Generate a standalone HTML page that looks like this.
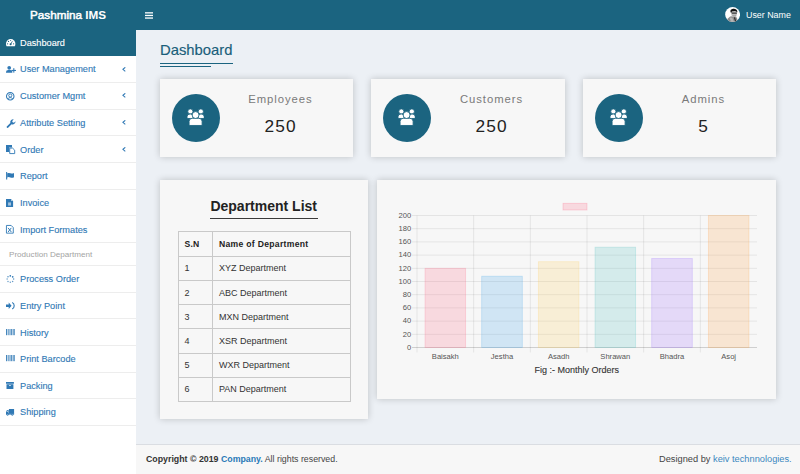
<!DOCTYPE html>
<html><head><meta charset="utf-8"><style>
*{box-sizing:border-box;margin:0;padding:0}
html,body{width:800px;height:474px;overflow:hidden;background:#ecf0f5;font-family:"Liberation Sans",sans-serif}
.a{position:absolute}
.t{position:absolute;white-space:nowrap}
.card{position:absolute;background:#f7f7f7;box-shadow:0 0 7px rgba(0,0,0,.2)}
</style></head><body>
<div class="a" style="left:0;top:0;width:800px;height:29.5px;background:#1b6480"></div>
<div class="t" style="left:30px;top:6.5px;color:#fff;font-size:11.7px;line-height:16px"><span style="-webkit-text-stroke:0.5px #fff">Pashmina</span> <b>IMS</b></div>
<svg class="a" style="left:145px;top:12px" width="8" height="7" viewBox="0 0 8 7"><g fill="#fff"><rect x="0" y="0.2" width="8" height="1.3"/><rect x="0" y="2.8" width="8" height="1.3"/><rect x="0" y="5.4" width="8" height="1.3"/></g></svg>
<svg class="a" style="left:725px;top:7.3px" width="15.2" height="15" viewBox="0 0 15 15"><defs><clipPath id="av"><circle cx="7.5" cy="7.5" r="7.4"/></clipPath></defs><circle cx="7.5" cy="7.5" r="7.45" fill="#fff"/><g clip-path="url(#av)"><path d="M1.5 15 Q2.2 11 5 9.6 L7.2 9.2 L11 9.6 Q12.6 11.5 12.4 15Z" fill="#8c8c8c"/><path d="M4.5 11 Q6 10 7.5 11.5 L9 15 L6 15Z" fill="#b5b5b5"/><path d="M8.6 10 L10.2 15 L11.2 15 L9.8 9.8Z" fill="#2a2a2a"/><ellipse cx="9" cy="7.2" rx="2.7" ry="3.1" fill="#bdbdbd"/><path d="M5.4 5 Q4.8 2.2 8 1.7 Q11.6 1.4 12.2 4.2 Q12.3 5.2 11.7 5.8 L11.2 4.4 Q9.2 3.6 6.8 4.6 L6.2 6.2Z" fill="#111"/><rect x="6.6" y="5.6" width="5.2" height="1.2" rx="0.4" fill="#3a3a3a"/><path d="M7.5 8.6 Q9 9.4 10.6 8.4" stroke="#777" stroke-width="0.5" fill="none"/></g></svg>
<div class="t" style="left:746px;top:9px;color:#fff;font-size:8.9px;line-height:12px">User Name</div>
<div class="a" style="left:0;top:29.5px;width:136px;height:445px;background:#fff"></div>
<div class="a" style="left:0;top:29.5px;width:136px;height:26px;background:#1b6480"></div>
<div class="a" style="left:0;top:82px;width:136px;height:1px;background:#ededed"></div>
<div class="a" style="left:0;top:109px;width:136px;height:1px;background:#ededed"></div>
<div class="a" style="left:0;top:135px;width:136px;height:1px;background:#ededed"></div>
<div class="a" style="left:0;top:162px;width:136px;height:1px;background:#ededed"></div>
<div class="a" style="left:0;top:189px;width:136px;height:1px;background:#ededed"></div>
<div class="a" style="left:0;top:215px;width:136px;height:1px;background:#ededed"></div>
<div class="a" style="left:0;top:242px;width:136px;height:1px;background:#ededed"></div>
<div class="a" style="left:0;top:265px;width:136px;height:1px;background:#ededed"></div>
<div class="a" style="left:0;top:292px;width:136px;height:1px;background:#ededed"></div>
<div class="a" style="left:0;top:318px;width:136px;height:1px;background:#ededed"></div>
<div class="a" style="left:0;top:345px;width:136px;height:1px;background:#ededed"></div>
<div class="a" style="left:0;top:372px;width:136px;height:1px;background:#ededed"></div>
<div class="a" style="left:0;top:398px;width:136px;height:1px;background:#ededed"></div>
<div class="a" style="left:0;top:425px;width:136px;height:1px;background:#ededed"></div>
<div class="t" style="left:20px;top:37.06px;font-size:9.2px;line-height:12px;color:#fff;-webkit-text-stroke:0.12px #fff">Dashboard</div>
<svg class="a" style="left:5.5px;top:38.9px;color:#fff" width="9.4" height="7.3" viewBox="0 0 9.4 7.3" overflow="visible"><path d="M0.6 7.2 Q0 6.4 0 4.7 A4.7 4.7 0 0 1 9.4 4.7 Q9.4 6.4 8.8 7.2Z" fill="#fff"/><g fill="#1b6480"><circle cx="4.6" cy="5.3" r="1.0"/><path d="M4.2 5.2 L6.2 1.9 L6.7 2.2 L5 5.5Z"/><circle cx="1.6" cy="4.8" r="0.6"/><circle cx="2.5" cy="2.4" r="0.6"/><circle cx="7.6" cy="4.8" r="0.6"/><circle cx="4.6" cy="1.4" r="0.5"/></g></svg>
<div class="t" style="left:20px;top:63.41px;font-size:9.2px;line-height:12px;color:#3079b5;-webkit-text-stroke:0.12px #3079b5">User Management</div>
<svg class="a" style="left:6.0px;top:66.0px;color:#3079b5" width="10" height="7" viewBox="0 0 10 7" overflow="visible"><g fill="currentColor"><circle cx="3.2" cy="1.85" r="1.85"/><path d="M0 6.8 L0 6 Q0 3.9 2.3 3.9 L4.1 3.9 Q5.9 3.9 6.3 5.3 L6.3 6.8Z"/><rect x="5.6" y="3.9" width="4.4" height="1.1"/><rect x="7.25" y="2.2" width="1.1" height="4.4"/></g></svg>
<svg class="a" style="left:121.5px;top:66.65px" width="4" height="5" viewBox="0 0 4 5"><path d="M3.3 0.3 L0.9 2.3 L3.3 4.4" fill="none" stroke="#3079b5" stroke-width="1.05"/></svg>
<div class="t" style="left:20px;top:90.21px;font-size:9.2px;line-height:12px;color:#3079b5;-webkit-text-stroke:0.12px #3079b5">Customer Mgmt</div>
<svg class="a" style="left:6.0px;top:91.8px;color:#3079b5" width="8.5" height="8.5" viewBox="0 0 8.5 8.5" overflow="visible"><circle cx="4.25" cy="4.25" r="3.75" fill="#fff" stroke="currentColor" stroke-width="1.05"/><circle cx="4.25" cy="3.5" r="1.55" fill="none" stroke="currentColor" stroke-width="0.95"/><path d="M1.8 6.9 Q2.4 5.6 4.25 5.6 Q6.1 5.6 6.7 6.9" fill="none" stroke="currentColor" stroke-width="0.95"/></svg>
<svg class="a" style="left:121.5px;top:93.45px" width="4" height="5" viewBox="0 0 4 5"><path d="M3.3 0.3 L0.9 2.3 L3.3 4.4" fill="none" stroke="#3079b5" stroke-width="1.05"/></svg>
<div class="t" style="left:20px;top:116.91px;font-size:9.2px;line-height:12px;color:#3079b5;-webkit-text-stroke:0.12px #3079b5">Attribute Setting</div>
<svg class="a" style="left:5.5px;top:118.6px;color:#3079b5" width="9.6" height="9.3" viewBox="0 0 9.6 9.3" overflow="visible"><path d="M0.8 7.4 L4.3 3.9 Q3.9 2.2 5.2 1 Q6.3 0.1 7.7 0.4 L6.2 1.9 L6.6 3.3 L8 3.7 L9.5 2.2 Q9.6 3.8 8.4 4.8 Q7.2 5.7 5.6 5.2 L2.1 8.7 Q1.5 9.2 0.8 8.6 Q0.3 8 0.8 7.4Z" fill="currentColor"/></svg>
<svg class="a" style="left:121.5px;top:120.15px" width="4" height="5" viewBox="0 0 4 5"><path d="M3.3 0.3 L0.9 2.3 L3.3 4.4" fill="none" stroke="#3079b5" stroke-width="1.05"/></svg>
<div class="t" style="left:20px;top:143.61px;font-size:9.2px;line-height:12px;color:#3079b5;-webkit-text-stroke:0.12px #3079b5">Order</div>
<svg class="a" style="left:6.0px;top:145.0px;color:#3079b5" width="9.2" height="9.2" viewBox="0 0 9.2 9.2" overflow="visible"><path d="M0 0 L6 0 L6 2.6 L3.2 2.6 L3.2 7 L0 7Z" fill="currentColor"/><path d="M3.7 3.1 L6.6 3.1 L8.7 5.2 L8.7 8.6 L3.7 8.6Z" fill="none" stroke="currentColor" stroke-width="0.9"/></svg>
<svg class="a" style="left:121.5px;top:146.85px" width="4" height="5" viewBox="0 0 4 5"><path d="M3.3 0.3 L0.9 2.3 L3.3 4.4" fill="none" stroke="#3079b5" stroke-width="1.05"/></svg>
<div class="t" style="left:20px;top:170.31px;font-size:9.2px;line-height:12px;color:#3079b5;-webkit-text-stroke:0.12px #3079b5">Report</div>
<svg class="a" style="left:6.2px;top:172.4px;color:#3079b5" width="8.2" height="7.5" viewBox="0 0 8.2 7.5" overflow="visible"><rect x="0.1" y="0" width="1.1" height="7.5" fill="currentColor"/><path d="M1.2 1.2 Q2.6 0.6 4.4 1.3 Q6.2 2 8 1 L8 5.3 Q6.2 6.2 4.4 5.5 Q2.6 4.8 1.2 5.4Z" fill="currentColor"/></svg>
<div class="t" style="left:20px;top:197.01px;font-size:9.2px;line-height:12px;color:#3079b5;-webkit-text-stroke:0.12px #3079b5">Invoice</div>
<svg class="a" style="left:6.0px;top:198.7px;color:#3079b5" width="7.1" height="8.1" viewBox="0 0 7.1 8.1" overflow="visible"><path d="M0 0 L5 0 L7.1 2.1 L7.1 8.1 L0 8.1Z" fill="currentColor"/><path d="M5 0 L5 2.1 L7.1 2.1" fill="#fff" opacity="0.6"/><rect x="2.1" y="3.6" width="2.9" height="1.1" fill="#fff" opacity="0.8"/><rect x="2.1" y="5.3" width="2.9" height="1.1" fill="#fff" opacity="0.8"/></svg>
<div class="t" style="left:20px;top:223.66px;font-size:9.2px;line-height:12px;color:#3079b5;-webkit-text-stroke:0.12px #3079b5">Import Formates</div>
<svg class="a" style="left:6.0px;top:225.2px;color:#3079b5" width="7.8" height="8.6" viewBox="0 0 7.8 8.6" overflow="visible"><path d="M0.45 0.45 L5.2 0.45 L7.3 2.6 L7.3 8.15 L0.45 8.15Z" fill="none" stroke="currentColor" stroke-width="0.9"/><path d="M2.1 2.9 L5.3 7 M5.3 2.9 L2.1 7" stroke="currentColor" stroke-width="1"/></svg>
<div class="t" style="left:20px;top:273.36px;font-size:9.2px;line-height:12px;color:#3079b5;-webkit-text-stroke:0.12px #3079b5">Process Order</div>
<svg class="a" style="left:6.8px;top:274.8px;color:#3079b5" width="7.6" height="8.1" viewBox="0 0 7.6 8.1" overflow="visible"><g fill="currentColor"><circle cx="3.3" cy="0.8" r="0.85"/><circle cx="5.7" cy="1.8" r="0.85"/><circle cx="6.6" cy="4.1" r="0.75" opacity="0.8"/><circle cx="5.6" cy="6.4" r="0.75" opacity="0.75"/><circle cx="3.3" cy="7.3" r="0.75" opacity="0.7"/><circle cx="1" cy="6.4" r="0.75" opacity="0.7"/><circle cx="0.1" cy="4.1" r="0.75" opacity="0.7"/><circle cx="1" cy="1.8" r="0.8" opacity="0.8"/></g></svg>
<div class="t" style="left:20px;top:299.96px;font-size:9.2px;line-height:12px;color:#3079b5;-webkit-text-stroke:0.12px #3079b5">Entry Point</div>
<svg class="a" style="left:6.0px;top:301.6px;color:#3079b5" width="8.8" height="7.6" viewBox="0 0 8.8 7.6" overflow="visible"><path d="M0 2.5 L2.7 2.5 L2.7 0.5 L5.6 3.8 L2.7 7.1 L2.7 5.1 L0 5.1Z" fill="currentColor"/><path d="M6.2 0.6 Q8.2 1.4 8.2 3.8 Q8.2 6.2 6.2 7" fill="none" stroke="currentColor" stroke-width="1.1"/></svg>
<div class="t" style="left:20px;top:326.56px;font-size:9.2px;line-height:12px;color:#3079b5;-webkit-text-stroke:0.12px #3079b5">History</div>
<svg class="a" style="left:6.0px;top:328.8px;color:#3079b5" width="8.7" height="6.2" viewBox="0 0 8.7 6.2" overflow="visible"><g fill="currentColor"><rect x="0" y="0" width="0.9" height="6.2"/><rect x="1.5" y="0" width="0.5" height="6.2" opacity="0.6"/><rect x="2.4" y="0" width="0.9" height="6.2"/><rect x="3.8" y="0" width="0.6" height="6.2"/><rect x="4.9" y="0" width="0.9" height="6.2"/><rect x="6.3" y="0" width="0.5" height="6.2" opacity="0.7"/><rect x="7.4" y="0" width="1.3" height="6.2"/></g></svg>
<div class="t" style="left:20px;top:353.16px;font-size:9.2px;line-height:12px;color:#3079b5;-webkit-text-stroke:0.12px #3079b5">Print Barcode</div>
<svg class="a" style="left:6.0px;top:355.4px;color:#3079b5" width="8.7" height="6.2" viewBox="0 0 8.7 6.2" overflow="visible"><g fill="currentColor"><rect x="0" y="0" width="0.9" height="6.2"/><rect x="1.5" y="0" width="0.5" height="6.2" opacity="0.6"/><rect x="2.4" y="0" width="0.9" height="6.2"/><rect x="3.8" y="0" width="0.6" height="6.2"/><rect x="4.9" y="0" width="0.9" height="6.2"/><rect x="6.3" y="0" width="0.5" height="6.2" opacity="0.7"/><rect x="7.4" y="0" width="1.3" height="6.2"/></g></svg>
<div class="t" style="left:20px;top:379.81px;font-size:9.2px;line-height:12px;color:#3079b5;-webkit-text-stroke:0.12px #3079b5">Packing</div>
<svg class="a" style="left:6.2px;top:382.1px;color:#3079b5" width="7.9" height="6.9" viewBox="0 0 7.9 6.9" overflow="visible"><path d="M0 0 L7.9 0 L7.9 1.8 L0 1.8Z M0.5 2.3 L7.4 2.3 L7.4 6.9 L0.5 6.9Z" fill="currentColor"/><rect x="3" y="3" width="1.9" height="1" fill="#fff" opacity="0.7"/></svg>
<div class="t" style="left:20px;top:406.46px;font-size:9.2px;line-height:12px;color:#3079b5;-webkit-text-stroke:0.12px #3079b5">Shipping</div>
<svg class="a" style="left:6.1px;top:408.8px;color:#3079b5" width="8.1" height="6.7" viewBox="0 0 8.1 6.7" overflow="visible"><g fill="currentColor"><rect x="2.9" y="0" width="5.2" height="4.7"/><path d="M0 2.9 L1 1.1 L2.6 1.1 L2.6 5.2 L0 5.2Z"/><rect x="0" y="4.3" width="8.1" height="1.3"/><circle cx="1.6" cy="5.6" r="1.1"/><circle cx="6.3" cy="5.6" r="1.1"/></g><path d="M0.6 2.9 L1.2 1.8 L2 1.8 L2 2.9Z" fill="#fff" opacity="0.6"/><circle cx="1.6" cy="5.6" r="0.4" fill="#fff"/><circle cx="6.3" cy="5.6" r="0.4" fill="#fff"/></svg>
<div class="t" style="left:9px;top:248.94px;font-size:8.1px;line-height:12px;color:#a3a3a3">Production Department</div>
<div class="a" style="left:136px;top:29.5px;width:664px;height:414px;background:#ecf0f5"></div>
<div class="a" style="left:136px;top:443.5px;width:664px;height:31px;background:#f7f7f7;border-top:1px solid #dadde2"></div>
<div class="t" style="left:160px;top:40.87px;color:#195e7a;font-size:14.8px;line-height:18px;-webkit-text-stroke:0.15px #195e7a">Dashboard</div>
<div class="a" style="left:160px;top:62.8px;width:72.5px;height:1.2px;background:#1b6480"></div>
<div class="a" style="left:160px;top:65.7px;width:51px;height:1.2px;background:#1b6480"></div>
<div class="card" style="left:160px;top:79px;width:193px;height:77.5px">
<div class="a" style="left:11.7px;top:14.8px;width:48px;height:48px;border-radius:50%;background:#1b6480"></div>
<svg class="a" style="left:27.2px;top:30.2px" width="17.3" height="16.7" viewBox="0 0 16 15.5"><g fill="#fff" stroke="#1b6480" stroke-width="0.8"><circle cx="3.1" cy="2.3" r="2.4"/><circle cx="12.8" cy="2.3" r="2.4"/><path d="M0 8.8 L0 7.2 Q0 4.6 3 4.6 Q5.2 4.6 5.6 6.2 L5.6 8.8Z"/><path d="M16 8.8 L16 7.2 Q16 4.6 13 4.6 Q10.8 4.6 10.4 6.2 L10.4 8.8Z"/><path d="M1.9 15.3 L1.9 11.6 Q1.9 8.6 5 8.6 L10.9 8.6 Q14 8.6 14 11.6 L14 15.3Z"/><circle cx="7.95" cy="5.6" r="3.2"/></g></svg>
<div class="t" style="left:60px;width:120px;text-align:center;top:14.23px;font-size:11.3px;line-height:12px;letter-spacing:0.95px;text-indent:0.95px;color:#7a7a7a">Employees</div>
<div class="t" style="left:60px;width:120px;text-align:center;top:36.70px;font-size:17.3px;line-height:20px;letter-spacing:1.2px;text-indent:1.2px;color:#222">250</div>
</div>
<div class="card" style="left:371px;top:79px;width:194px;height:77.5px">
<div class="a" style="left:11.7px;top:14.8px;width:48px;height:48px;border-radius:50%;background:#1b6480"></div>
<svg class="a" style="left:27.2px;top:30.2px" width="17.3" height="16.7" viewBox="0 0 16 15.5"><g fill="#fff" stroke="#1b6480" stroke-width="0.8"><circle cx="3.1" cy="2.3" r="2.4"/><circle cx="12.8" cy="2.3" r="2.4"/><path d="M0 8.8 L0 7.2 Q0 4.6 3 4.6 Q5.2 4.6 5.6 6.2 L5.6 8.8Z"/><path d="M16 8.8 L16 7.2 Q16 4.6 13 4.6 Q10.8 4.6 10.4 6.2 L10.4 8.8Z"/><path d="M1.9 15.3 L1.9 11.6 Q1.9 8.6 5 8.6 L10.9 8.6 Q14 8.6 14 11.6 L14 15.3Z"/><circle cx="7.95" cy="5.6" r="3.2"/></g></svg>
<div class="t" style="left:60px;width:120px;text-align:center;top:14.23px;font-size:11.3px;line-height:12px;letter-spacing:0.95px;text-indent:0.95px;color:#7a7a7a">Customers</div>
<div class="t" style="left:60px;width:120px;text-align:center;top:36.70px;font-size:17.3px;line-height:20px;letter-spacing:1.2px;text-indent:1.2px;color:#222">250</div>
</div>
<div class="card" style="left:583px;top:79px;width:193px;height:77.5px">
<div class="a" style="left:11.7px;top:14.8px;width:48px;height:48px;border-radius:50%;background:#1b6480"></div>
<svg class="a" style="left:27.2px;top:30.2px" width="17.3" height="16.7" viewBox="0 0 16 15.5"><g fill="#fff" stroke="#1b6480" stroke-width="0.8"><circle cx="3.1" cy="2.3" r="2.4"/><circle cx="12.8" cy="2.3" r="2.4"/><path d="M0 8.8 L0 7.2 Q0 4.6 3 4.6 Q5.2 4.6 5.6 6.2 L5.6 8.8Z"/><path d="M16 8.8 L16 7.2 Q16 4.6 13 4.6 Q10.8 4.6 10.4 6.2 L10.4 8.8Z"/><path d="M1.9 15.3 L1.9 11.6 Q1.9 8.6 5 8.6 L10.9 8.6 Q14 8.6 14 11.6 L14 15.3Z"/><circle cx="7.95" cy="5.6" r="3.2"/></g></svg>
<div class="t" style="left:60px;width:120px;text-align:center;top:14.23px;font-size:11.3px;line-height:12px;letter-spacing:0.95px;text-indent:0.95px;color:#7a7a7a">Admins</div>
<div class="t" style="left:60px;width:120px;text-align:center;top:36.70px;font-size:17.3px;line-height:20px;letter-spacing:1.2px;text-indent:1.2px;color:#222">5</div>
</div>
<div class="card" style="left:160px;top:180.2px;width:208px;height:239.3px"></div>
<div class="t" style="left:210.4px;top:200.16px;font-size:14px;line-height:12px;font-weight:bold;color:#222">Department List</div>
<div class="a" style="left:210.4px;top:218.2px;width:108px;height:1.3px;background:#3a3a3a"></div>
<div class="a" style="left:178.2px;top:230.90px;width:173.1px;height:1px;background:#c9c9c9"></div>
<div class="a" style="left:178.2px;top:255.50px;width:173.1px;height:1px;background:#c9c9c9"></div>
<div class="a" style="left:178.2px;top:279.90px;width:173.1px;height:1px;background:#c9c9c9"></div>
<div class="a" style="left:178.2px;top:304.10px;width:173.1px;height:1px;background:#c9c9c9"></div>
<div class="a" style="left:178.2px;top:328.40px;width:173.1px;height:1px;background:#c9c9c9"></div>
<div class="a" style="left:178.2px;top:352.60px;width:173.1px;height:1px;background:#c9c9c9"></div>
<div class="a" style="left:178.2px;top:376.80px;width:173.1px;height:1px;background:#c9c9c9"></div>
<div class="a" style="left:178.2px;top:400.90px;width:173.1px;height:1px;background:#c9c9c9"></div>
<div class="a" style="left:177.70px;top:230.90px;width:1px;height:171.0px;background:#c9c9c9"></div>
<div class="a" style="left:212.00px;top:230.90px;width:1px;height:171.0px;background:#c9c9c9"></div>
<div class="a" style="left:349.80px;top:230.90px;width:1px;height:171.0px;background:#c9c9c9"></div>
<div class="t" style="left:184.4px;top:237.80px;line-height:12px;font-weight:bold;color:#222;font-size:8.6px;letter-spacing:0.3px">S.N</div>
<div class="t" style="left:219px;top:237.80px;line-height:12px;font-weight:bold;color:#222;font-size:8.6px;letter-spacing:0.3px">Name of Department</div>
<div class="t" style="left:184.4px;top:262.30px;line-height:12px;color:#333;font-size:9px">1</div>
<div class="t" style="left:219px;top:262.30px;line-height:12px;color:#333;font-size:9px">XYZ Department</div>
<div class="t" style="left:184.4px;top:286.60px;line-height:12px;color:#333;font-size:9px">2</div>
<div class="t" style="left:219px;top:286.60px;line-height:12px;color:#333;font-size:9px">ABC Department</div>
<div class="t" style="left:184.4px;top:310.85px;line-height:12px;color:#333;font-size:9px">3</div>
<div class="t" style="left:219px;top:310.85px;line-height:12px;color:#333;font-size:9px">MXN Department</div>
<div class="t" style="left:184.4px;top:335.10px;line-height:12px;color:#333;font-size:9px">4</div>
<div class="t" style="left:219px;top:335.10px;line-height:12px;color:#333;font-size:9px">XSR Department</div>
<div class="t" style="left:184.4px;top:359.30px;line-height:12px;color:#333;font-size:9px">5</div>
<div class="t" style="left:219px;top:359.30px;line-height:12px;color:#333;font-size:9px">WXR Department</div>
<div class="t" style="left:184.4px;top:383.45px;line-height:12px;color:#333;font-size:9px">6</div>
<div class="t" style="left:219px;top:383.45px;line-height:12px;color:#333;font-size:9px">PAN Department</div>
<div class="card" style="left:377px;top:180.2px;width:399px;height:219.3px"></div>
<svg class="a" style="left:0;top:0" width="800" height="474" viewBox="0 0 800 474" font-family="Liberation Sans" font-size="7.6" fill="#555"><line x1="412" y1="215.50" x2="757.0" y2="215.50" stroke="rgba(0,0,0,0.075)" stroke-width="1"/><text x="411.2" y="217.70" text-anchor="end">200</text><line x1="412" y1="228.70" x2="757.0" y2="228.70" stroke="rgba(0,0,0,0.075)" stroke-width="1"/><text x="411.2" y="230.90" text-anchor="end">180</text><line x1="412" y1="241.90" x2="757.0" y2="241.90" stroke="rgba(0,0,0,0.075)" stroke-width="1"/><text x="411.2" y="244.10" text-anchor="end">160</text><line x1="412" y1="255.10" x2="757.0" y2="255.10" stroke="rgba(0,0,0,0.075)" stroke-width="1"/><text x="411.2" y="257.30" text-anchor="end">140</text><line x1="412" y1="268.30" x2="757.0" y2="268.30" stroke="rgba(0,0,0,0.075)" stroke-width="1"/><text x="411.2" y="270.50" text-anchor="end">120</text><line x1="412" y1="281.50" x2="757.0" y2="281.50" stroke="rgba(0,0,0,0.075)" stroke-width="1"/><text x="411.2" y="283.70" text-anchor="end">100</text><line x1="412" y1="294.70" x2="757.0" y2="294.70" stroke="rgba(0,0,0,0.075)" stroke-width="1"/><text x="411.2" y="296.90" text-anchor="end">80</text><line x1="412" y1="307.90" x2="757.0" y2="307.90" stroke="rgba(0,0,0,0.075)" stroke-width="1"/><text x="411.2" y="310.10" text-anchor="end">60</text><line x1="412" y1="321.10" x2="757.0" y2="321.10" stroke="rgba(0,0,0,0.075)" stroke-width="1"/><text x="411.2" y="323.30" text-anchor="end">40</text><line x1="412" y1="334.30" x2="757.0" y2="334.30" stroke="rgba(0,0,0,0.075)" stroke-width="1"/><text x="411.2" y="336.50" text-anchor="end">20</text><line x1="412" y1="347.50" x2="757.0" y2="347.50" stroke="rgba(0,0,0,0.16)" stroke-width="1"/><text x="411.2" y="349.70" text-anchor="end">0</text><line x1="417.00" y1="215.5" x2="417.00" y2="352.5" stroke="rgba(0,0,0,0.075)" stroke-width="1"/><line x1="473.67" y1="215.5" x2="473.67" y2="352.5" stroke="rgba(0,0,0,0.075)" stroke-width="1"/><line x1="530.33" y1="215.5" x2="530.33" y2="352.5" stroke="rgba(0,0,0,0.075)" stroke-width="1"/><line x1="587.00" y1="215.5" x2="587.00" y2="352.5" stroke="rgba(0,0,0,0.075)" stroke-width="1"/><line x1="643.67" y1="215.5" x2="643.67" y2="352.5" stroke="rgba(0,0,0,0.075)" stroke-width="1"/><line x1="700.33" y1="215.5" x2="700.33" y2="352.5" stroke="rgba(0,0,0,0.075)" stroke-width="1"/><rect x="425.03" y="268.30" width="40.6" height="79.20" fill="rgba(255,99,132,0.2)" stroke="rgba(255,99,132,0.25)" stroke-width="0.8"/><text x="445.33" y="358.9" text-anchor="middle">Baisakh</text><rect x="481.70" y="276.22" width="40.6" height="71.28" fill="rgba(54,162,235,0.2)" stroke="rgba(54,162,235,0.25)" stroke-width="0.8"/><text x="502.00" y="358.9" text-anchor="middle">Jestha</text><rect x="538.37" y="261.70" width="40.6" height="85.80" fill="rgba(255,206,86,0.2)" stroke="rgba(255,206,86,0.25)" stroke-width="0.8"/><text x="558.67" y="358.9" text-anchor="middle">Asadh</text><rect x="595.03" y="247.18" width="40.6" height="100.32" fill="rgba(75,192,192,0.2)" stroke="rgba(75,192,192,0.25)" stroke-width="0.8"/><text x="615.33" y="358.9" text-anchor="middle">Shrawan</text><rect x="651.70" y="258.40" width="40.6" height="89.10" fill="rgba(153,102,255,0.2)" stroke="rgba(153,102,255,0.25)" stroke-width="0.8"/><text x="672.00" y="358.9" text-anchor="middle">Bhadra</text><rect x="708.37" y="215.50" width="40.6" height="132.00" fill="rgba(255,159,64,0.2)" stroke="rgba(255,159,64,0.25)" stroke-width="0.8"/><text x="728.67" y="358.9" text-anchor="middle">Asoj</text><rect x="563" y="203.3" width="24" height="6.7" fill="rgba(255,99,132,0.2)" stroke="rgba(255,99,132,0.3)" stroke-width="0.8"/></svg>
<div class="t" style="left:534.4px;top:364.10px;font-size:9px;color:#333;line-height:12px;-webkit-text-stroke:0.1px #333">Fig :- Monthly Orders</div>
<div class="t" style="left:146px;top:452.90px;font-size:8.8px;line-height:12px;color:#444"><b style="color:#333">Copyright &copy; 2019 <span style="color:#2a7ab8">Company.</span></b> All rights reserved.</div>
<div class="t" style="left:659px;top:452.91px;font-size:9.25px;line-height:12px;color:#444">Designed by <span style="color:#3a88c0">keiv technnologies.</span></div>
</body></html>
